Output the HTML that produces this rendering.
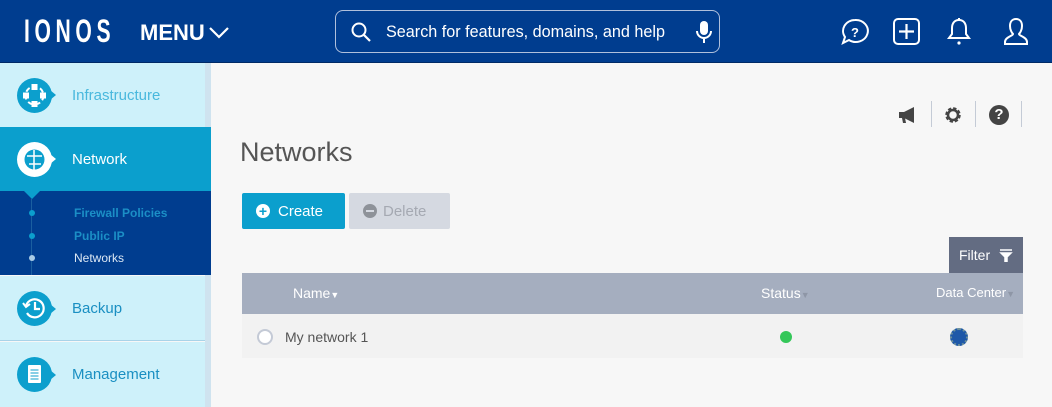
<!DOCTYPE html>
<html><head><meta charset="utf-8"><style>
*{margin:0;padding:0;box-sizing:border-box}
body{width:1052px;height:407px;overflow:hidden;background:#f7f7f7;font-family:"Liberation Sans",sans-serif;position:relative}
.hdr{position:absolute;left:0;top:0;width:1052px;height:63px;background:#003d8f;border-bottom:1px solid #002a66}
.abs{position:absolute}
.side{position:absolute;left:0;top:63px;width:211px;height:344px}
.item{position:absolute;left:0;width:205px;display:flex;align-items:center}
.item .ic{position:absolute;left:17px;width:35px;height:35px;border-radius:50%}
.item .tip{position:absolute;left:50px;width:0;height:0;border-top:5px solid transparent;border-bottom:5px solid transparent;border-left:6px solid #0c9fcd}
.item span{position:absolute;left:72px;font-size:15px}
</style></head><body>
<div class="hdr">
 <div class="abs" style="left:24px;top:13px;color:#fff;font-size:32px;letter-spacing:7px;transform:scaleX(0.66);transform-origin:left;font-weight:bold">IONOS</div>
 <div class="abs" style="left:140px;top:20px;color:#fff;font-size:22px;font-weight:bold">MENU</div>
 <svg class="abs" style="left:208px;top:25px" width="22" height="14"><path d="M2 3l9 9 9-9" stroke="#fff" stroke-width="2.2" fill="none"/></svg>
 <div class="abs" style="left:335px;top:10px;width:385px;height:43px;border:1px solid #b0c0dc;border-radius:8px"></div>
 <svg class="abs" style="left:350px;top:21px" width="22" height="22"><circle cx="9" cy="9" r="6.5" stroke="#fff" stroke-width="2" fill="none"/><path d="M14 14l6 6" stroke="#fff" stroke-width="2.2"/></svg>
 <div class="abs" style="left:386px;top:23px;color:#fff;font-size:16.2px">Search for features, domains, and help</div>
 <svg class="abs" style="left:695px;top:20px" width="18" height="26"><rect x="5" y="1" width="8" height="14" rx="4" fill="#fff"/><path d="M2 11a7 7 0 0 0 14 0M9 18v5" stroke="#fff" stroke-width="2" fill="none"/></svg>
 <svg class="abs" style="left:840px;top:17px" width="30" height="30"><path d="M15 3a12 11 0 1 1-6 20l-6 3 2-6a12 11 0 0 1 10-17z" stroke="#fff" stroke-width="2" fill="none"/><text x="15" y="20" fill="#fff" font-size="13" font-weight="bold" text-anchor="middle" font-family="Liberation Sans">?</text></svg>
 <svg class="abs" style="left:893px;top:18px" width="28" height="28"><rect x="1" y="1" width="25" height="25" rx="4" stroke="#fff" stroke-width="2" fill="none"/><path d="M13.5 6v15M6 13.5h15" stroke="#fff" stroke-width="2.2"/></svg>
 <svg class="abs" style="left:945px;top:17px" width="28" height="30"><path d="M14 3c-5 0-7 4-7 8v6l-3 4h20l-3-4v-6c0-4-2-8-7-8z" stroke="#fff" stroke-width="2" fill="none"/><circle cx="14" cy="26" r="1.6" fill="#fff"/><path d="M14 1v2" stroke="#fff" stroke-width="2"/></svg>
 <svg class="abs" style="left:1002px;top:17px" width="28" height="30"><path d="M14 2c-4 0-6 3-6 7s2 7 3 8c0 2-8 3-8 8v2h22v-2c0-5-8-6-8-8 1-1 3-4 3-8s-2-7-6-7z" stroke="#fff" stroke-width="2" fill="none"/></svg>
</div>
<div class="side">
 <div class="abs" style="left:205px;top:0;width:6px;height:344px;background:#cfe3ef"></div>
 <div class="item" style="top:0;height:64px;background:#cef1fa"><div class="ic" style="top:15px;background:#0c9fcd"><svg width="35" height="35"><circle cx="17.5" cy="17.5" r="9" stroke="#fff" stroke-width="2" fill="none" stroke-dasharray="5 3"/><rect x="14.5" y="6" width="6" height="6" fill="#fff"/><rect x="14.5" y="23" width="6" height="6" fill="#fff"/><rect x="6" y="14.5" width="6" height="6" fill="#fff"/><rect x="23" y="14.5" width="6" height="6" fill="#fff"/></svg></div><div class="tip" style="top:27px"></div><span style="color:#49b8dd">Infrastructure</span></div>
 <div class="item" style="top:64px;height:64px;background:#0b9fcd;width:211px"><div class="ic" style="top:15px;background:#fff"><svg width="35" height="35"><circle cx="17.5" cy="17.5" r="10" fill="#0b9fcd"/><path d="M10 14h15M12 22h12M17 8v20" stroke="#fff" stroke-width="1.5"/></svg></div><div class="tip" style="top:27px;border-left-color:#fff"></div><span style="color:#fff">Network</span></div>
 <div class="abs" style="left:24px;top:128px;width:0;height:0;border-left:8px solid transparent;border-right:8px solid transparent;border-top:8px solid #0b9fcd;z-index:2"></div>
 <div class="abs" style="left:0;top:128px;width:211px;height:84px;background:#003d8f">
  <div class="abs" style="left:31px;top:8px;width:1px;height:76px;background:#1b5fa0"></div>
  <div class="abs" style="left:29px;top:19px;width:6px;height:6px;border-radius:50%;background:#0b9fcd"></div>
  <div class="abs" style="left:29px;top:42px;width:6px;height:6px;border-radius:50%;background:#0b9fcd"></div>
  <div class="abs" style="left:29px;top:64px;width:6px;height:6px;border-radius:50%;background:#a9cbe6"></div>
  <div class="abs" style="left:74px;top:15px;font-size:12px;font-weight:bold;color:#1b8fc6">Firewall Policies</div>
  <div class="abs" style="left:74px;top:38px;font-size:12px;font-weight:bold;color:#1b8fc6">Public IP</div>
  <div class="abs" style="left:74px;top:60px;font-size:12px;color:#dce8f4">Networks</div>
 </div>
 <div class="item" style="top:213px;height:65px;background:#cef1fa;border-bottom:1px solid #a9d3e8"><div class="ic" style="top:15px;background:#0c9fcd"><svg width="35" height="35"><path d="M9 15a9 9 0 1 1 1 7" stroke="#fff" stroke-width="2.2" fill="none"/><path d="M6 12l3 4 4-3" stroke="#fff" stroke-width="2" fill="none"/><path d="M18 11v7h5" stroke="#fff" stroke-width="2.2" fill="none"/></svg></div><div class="tip" style="top:28px"></div><span style="color:#1a8fc2">Backup</span></div>
 <div class="item" style="top:279px;height:65px;background:#cef1fa"><div class="ic" style="top:15px;background:#0c9fcd"><svg width="35" height="35"><rect x="11" y="8" width="13" height="18" rx="1" fill="#fff"/><path d="M13.5 13h8M13.5 16h8M13.5 19h8M13.5 22h8" stroke="#0c9fcd"/></svg></div><div class="tip" style="top:28px"></div><span style="color:#1a8fc2">Management</span></div>
</div>
<svg class="abs" style="left:897px;top:106px" width="22" height="18"><path d="M2 6h5l10-5v16l-10-5H2z" fill="#444"/><path d="M5 12l1 5h3l-1-5" fill="#444"/></svg>
<div class="abs" style="left:931px;top:101px;width:1px;height:26px;background:#c4cbd6"></div>
<svg class="abs" style="left:943px;top:105px" width="20" height="20"><circle cx="10" cy="10" r="6" stroke="#444" stroke-width="3.5" fill="none" stroke-dasharray="3 1.7"/><circle cx="10" cy="10" r="5" stroke="#444" stroke-width="2.5" fill="none"/></svg>
<div class="abs" style="left:975px;top:101px;width:1px;height:26px;background:#c4cbd6"></div>
<div class="abs" style="left:989px;top:105px;width:20px;height:20px;border-radius:50%;background:#444;color:#fff;font-size:15px;font-weight:bold;text-align:center;line-height:20px">?</div>
<div class="abs" style="left:1021px;top:101px;width:1px;height:26px;background:#c4cbd6"></div>
<div class="abs" style="left:240px;top:137px;font-size:27px;color:#555">Networks</div>
<div class="abs" style="left:242px;top:193px;width:103px;height:36px;background:#0b9fcd;border-radius:2px;color:#fff;font-size:15px;line-height:37px;padding-left:36px">Create</div>
<div class="abs" style="left:256px;top:204px;width:14px;height:14px;border-radius:50%;background:#fff;color:#0b9fcd;font-size:14px;font-weight:bold;text-align:center;line-height:14px">+</div>
<div class="abs" style="left:349px;top:193px;width:101px;height:36px;background:#d5d9e1;border-radius:2px;color:#a5a9b2;font-size:15px;line-height:37px;padding-left:34px">Delete</div>
<div class="abs" style="left:363px;top:204px;width:14px;height:14px;border-radius:50%;background:#8e9299"><div style="margin:6px 3px;width:8px;height:2px;background:#d5d9e1"></div></div>
<div class="abs" style="left:949px;top:237px;width:74px;height:36px;background:#636c82;color:#fff;font-size:14px;line-height:36px;padding-left:10px">Filter</div>
<svg class="abs" style="left:999px;top:249px" width="14" height="13"><path d="M1 1h12M2 4h10l-4 4v5h-2v-5z" stroke="#fff" stroke-width="1.5" fill="#fff"/></svg>
<div class="abs" style="left:242px;top:273px;width:781px;height:41px;background:#a5aebf;color:#fff;font-size:14px">
 <div class="abs" style="left:51px;top:12px">Name<span style="font-size:9px">▼</span></div>
 <div class="abs" style="left:519px;top:12px">Status<span style="font-size:9px;color:#8e96a6">▼</span></div>
 <div class="abs" style="left:694px;top:12px;font-size:13px">Data Center<span style="font-size:9px;color:#8e96a6">▼</span></div>
</div>
<div class="abs" style="left:242px;top:314px;width:781px;height:44px;background:#f2f2f2;color:#555;font-size:14px">
 <div class="abs" style="left:15px;top:15px;width:16px;height:16px;border-radius:50%;border:2px solid #c4cad6;background:#fff"></div>
 <div class="abs" style="left:43px;top:15px">My network 1</div>
 <div class="abs" style="left:538px;top:17px;width:12px;height:12px;border-radius:50%;background:#34c759"></div>
 <div class="abs" style="left:708px;top:14px;width:18px;height:18px;border-radius:50%;background:#1e58a8;border:2px dotted #6b8f9a"></div>
</div>
</body></html>
